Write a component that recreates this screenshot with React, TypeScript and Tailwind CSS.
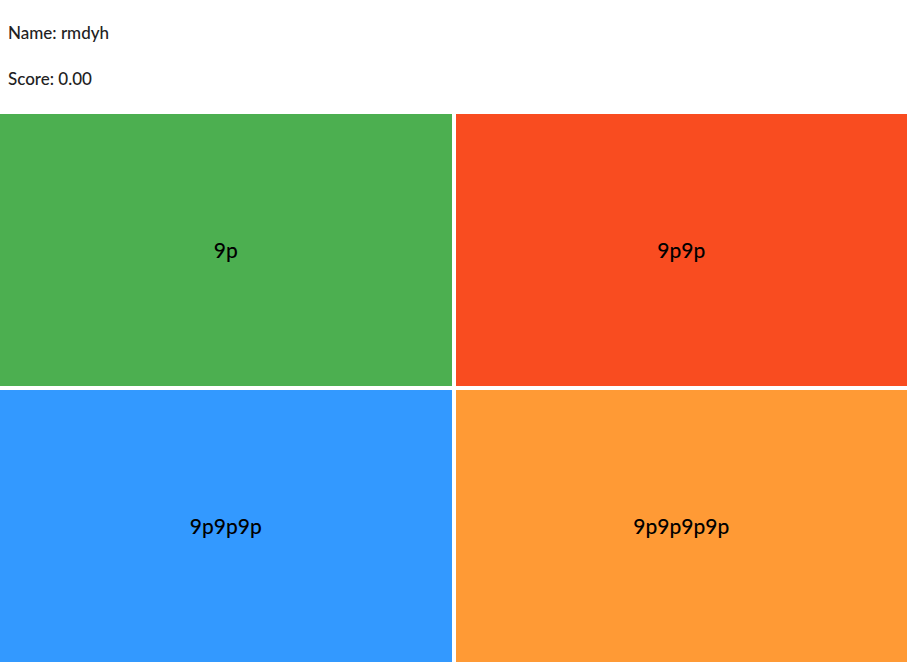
import React from 'react';

const tiles = [
  { label: '9p', color: 'bg-[#4caf50]' },
  { label: '9p9p', color: 'bg-[#f94c20]' },
  { label: '9p9p9p', color: 'bg-[#3399ff]' },
  { label: '9p9p9p9p', color: 'bg-[#ff9a35]' },
];

const App = () => {
  return (
    <div className="w-[909px] h-[664px] overflow-hidden bg-white text-[#222]" style={{ fontFamily: 'Lato, "Noto Sans", sans-serif' }}>
      <div className="pl-2 pt-[21px] h-[114px] text-[17px] leading-[24px] font-medium">
        <p>Name: rmdyh</p>
        <p className="mt-[22px]">Score: 0.00</p>
      </div>
      <div className="grid grid-cols-2 grid-rows-[272px_272px] gap-1 w-[907px]">
        {tiles.map((t) => (
          <div key={t.label} className={`${t.color} flex items-center justify-center text-[21px] font-medium text-black`}>
            {t.label}
          </div>
        ))}
      </div>
    </div>
  );
};

export default App;
